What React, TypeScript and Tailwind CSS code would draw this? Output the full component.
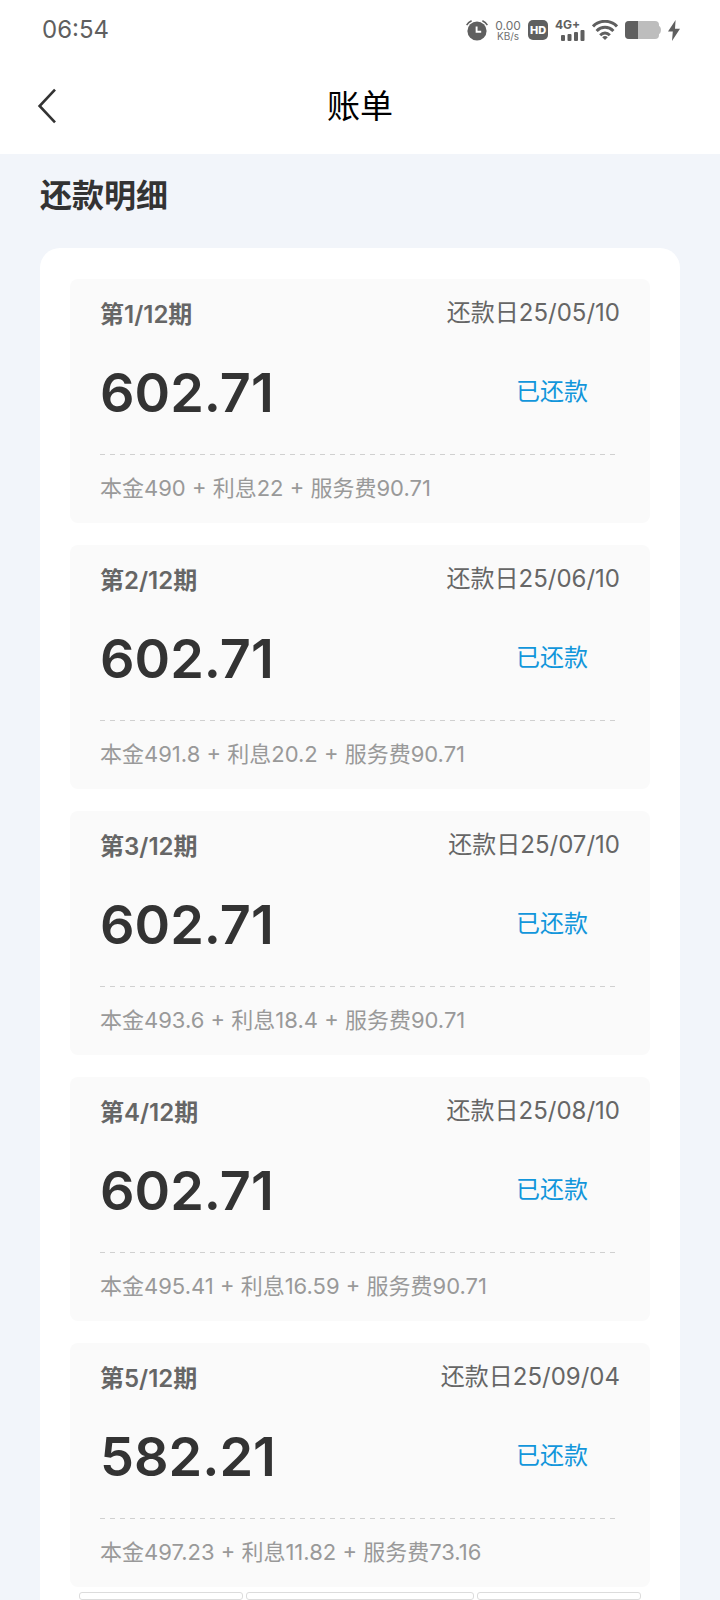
interface Installment {
    period: number;
    dueDate: string;
    amount: string;
    principal: string;
    interest: string;
    serviceFee: string;
}

const TOTAL_PERIODS = 12;

const installments: Installment[] = [
    { period: 1, dueDate: '25/05/10', amount: '602.71', principal: '490', interest: '22', serviceFee: '90.71' },
    { period: 2, dueDate: '25/06/10', amount: '602.71', principal: '491.8', interest: '20.2', serviceFee: '90.71' },
    { period: 3, dueDate: '25/07/10', amount: '602.71', principal: '493.6', interest: '18.4', serviceFee: '90.71' },
    { period: 4, dueDate: '25/08/10', amount: '602.71', principal: '495.41', interest: '16.59', serviceFee: '90.71' },
    { period: 5, dueDate: '25/09/04', amount: '582.21', principal: '497.23', interest: '11.82', serviceFee: '73.16' },
];

function AlarmIcon() {
    return (
        <svg width="22" height="21" viewBox="0 0 22 21" fill="none" stroke="#5f5f5f" aria-hidden="true">
            <circle cx="11" cy="11" r="9.6" fill="#5f5f5f" stroke="none" />
            <path d="M.6 5.200Q2.200 2.400 5.600.8M21.400 5.200Q19.800 2.400 16.400.8" strokeWidth="1.6" />
            <path d="M10.6 6.4v5.4h4.6" stroke="#fff" strokeWidth="1.9" />
        </svg>
    );
}

function SignalIcon() {
    return (
        <svg width="24" height="11" viewBox="0 0 24 11" fill="#5f5f5f" aria-hidden="true">
            <rect x="0" y="5" width="4" height="6" rx="1" />
            <rect x="6.5" y="4" width="4" height="7" rx="1" />
            <rect x="13" y="2" width="4" height="9" rx="1" />
            <rect x="19.5" y="0" width="4" height="11" rx="1" />
        </svg>
    );
}

function WifiIcon() {
    return (
        <svg width="26" height="20" viewBox="0 0 26 20" fill="none" stroke="#5f5f5f" strokeWidth="3" aria-hidden="true">
            <path d="M1 6.4C7.5-.4 18.5-.4 25 6.4" />
            <path d="M4.6 11c4.8-4.900 12-4.900 16.8 0" />
            <path d="M8.2 15.200c2.8-2.8 6.8-2.8 9.6 0" />
            <path d="M10.2 17.200c1.7-1.5 3.9-1.5 5.6 0L13 20Z" fill="#5f5f5f" stroke="none" />
        </svg>
    );
}

function BatteryIcon() {
    return (
        <svg width="36" height="18" viewBox="0 0 36 18" aria-hidden="true">
            <rect x="0" y="0" width="34" height="18" rx="4" fill="#bdbdbd" />
            <path d="M34 5c2.6 1 2.6 7 0 8Z" fill="#bdbdbd" />
            <path d="M4 0h9v18H4a4 4 0 0 1-4-4V4a4 4 0 0 1 4-4Z" fill="#5f5f5f" />
        </svg>
    );
}

function BoltIcon() {
    return (
        <svg width="12" height="21" viewBox="0 0 12 21" fill="#5f5f5f" aria-hidden="true">
            <path d="M7.6 0 0 11.6h4.8L4 21l8-12.200H7Z" />
        </svg>
    );
}

function StatusBar() {
    return (
        <div className="flex h-14 items-center justify-between pl-[42px] pr-10 pt-1 text-[#5f5f5f]">
            <span className="text-2xl">06:54</span>
            <div className="flex items-center gap-[7px]">
                <AlarmIcon />
                <div className="flex w-[26px] flex-col items-center text-[#707070]">
                    <span className="text-xs leading-[11px]">0.00</span>
                    <span className="text-[10px] leading-[10px]">KB/s</span>
                </div>
                <span className="flex h-5 w-5 items-center justify-center rounded-[5px] bg-[#5f5f5f] text-[11px] font-extrabold text-white">
                    HD
                </span>
                <div className="flex w-[30px] flex-col">
                    <span className="text-xs font-bold leading-[10px]">4G+</span>
                    <span className="self-end">
                        <SignalIcon />
                    </span>
                </div>
                <WifiIcon />
                <BatteryIcon />
                <BoltIcon />
            </div>
        </div>
    );
}

function NavBar() {
    return (
        <header className="grid h-[98px] grid-cols-[1fr_auto_1fr] items-center px-9 pt-0.5">
            <button type="button" aria-label="返回" className="justify-self-start">
                <svg width="22" height="36" viewBox="0 0 22 36" fill="none" stroke="#333" strokeWidth="2.6">
                    <path d="M19 1.6 3.6 18 19 34.4" />
                </svg>
            </button>
            <h1 className="text-[33px] leading-10 text-black">账单</h1>
        </header>
    );
}

function InstallmentCard({ item }: { item: Installment }) {
    return (
        <li className="rounded-lg bg-[#fafafa] px-[30px] pb-0.5 pt-4">
            <div className="flex items-start justify-between text-2xl text-[#666]">
                <h3 className="font-semibold leading-10">
                    第{item.period}/{TOTAL_PERIODS}期
                </h3>
                <span className="leading-9">还款日{item.dueDate}</span>
            </div>
            <div className="flex h-28 items-center justify-between pr-8 pt-0.5">
                <span className="text-[54px] font-semibold text-[#333]">{item.amount}</span>
                <span className="text-2xl text-[#1296db]">已还款</span>
            </div>
            <div className="mr-1 mt-[7px] h-px bg-[repeating-linear-gradient(90deg,#d0d0d0_0_5px,transparent_5px_10px)]" />
            <p className="text-[22px] leading-[66px] text-[#999]">
                本金{item.principal} + 利息{item.interest} + 服务费{item.serviceFee}
            </p>
        </li>
    );
}

export default function App() {
    return (
        <div className="min-h-screen bg-[#f2f5fa] font-['Inter','Noto_Sans_CJK_SC',sans-serif]">
            <div className="bg-white">
                <StatusBar />
                <NavBar />
            </div>
            <main className="px-10 pt-[18px]">
                <h2 className="mb-7 text-[32px] font-bold leading-[48px] text-[#333]">还款明细</h2>
                <section className="rounded-t-[20px] bg-white px-[30px] pt-[31px]">
                    <ul className="flex flex-col gap-[22px]">
                        {installments.map((item) => (
                            <InstallmentCard key={item.period} item={item} />
                        ))}
                    </ul>
                    <div className="grid grid-cols-[164fr_228fr_164fr] gap-[3px] px-[9px] pt-[5px]">
                        <div className="h-2 rounded-[3px] border border-[#dcdcdc]" />
                        <div className="h-2 rounded-[3px] border border-[#dcdcdc]" />
                        <div className="h-2 rounded-[3px] border border-[#dcdcdc]" />
                    </div>
                </section>
            </main>
        </div>
    );
}
